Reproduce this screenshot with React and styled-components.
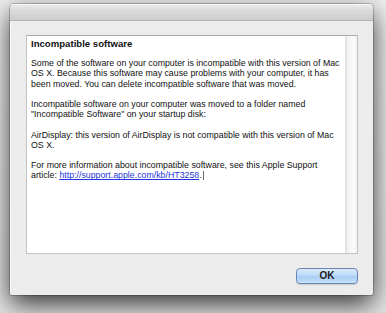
import React from "react";
import styled, { createGlobalStyle } from "styled-components";

const GlobalStyle = createGlobalStyle`
  html, body {
    margin: 0;
    padding: 0;
    background: #e9e9e9;
    height: 313px;
    overflow: hidden;
  }
`;

const Page = styled.div`
  width: 386px;
  height: 313px;
  display: flex;
  align-items: flex-start;
  background: linear-gradient(to bottom, #efefef 0%, #e4e4e4 100%);
`;

const Window = styled.div`
  margin: 4px 0 0 10px;
  width: 363px;
  height: 291px;
  display: flex;
  flex-direction: column;
  background: #ececec;
  border-radius: 4px 4px 2px 2px;
  box-shadow: 0 0 0 1px rgba(0, 0, 0, 0.2), 0 9px 26px rgba(0, 0, 0, 0.78);
  overflow: hidden;
`;

const TitleBar = styled.div`
  height: 16px;
  flex-shrink: 0;
  background: linear-gradient(to bottom, #ececec 0%, #dadada 40%, #cdcdcd 100%);
  border-bottom: 1px solid #b2b2b2;
  box-shadow: inset 0 1px 0 #f6f6f6;
`;

const Body = styled.div`
  flex: 1;
  display: flex;
  flex-direction: column;
  padding: 14px 15px 14px 15px;
  border-left: 1px solid #f7f7f7;
`;

const TextBox = styled.div`
  height: 217px;
  display: flex;
  background: #fff;
  border: 1px solid #c4c4c4;
  border-top-color: #a9a9a9;
`;

const TextArea = styled.div`
  flex: 1;
  padding: 3px 4px 0 4px;
  font-family: "Liberation Sans", Arial, sans-serif;
  font-size: 8.8px;
  line-height: 10.2px;
  color: #111;
`;

const Heading = styled.div`
  font-weight: bold;
  font-size: 9.6px;
  margin-bottom: 9px;
`;

const Para = styled.p`
  margin: 0 0 10.2px 0;
`;

const Link = styled.a`
  color: #2236dc;
  text-decoration: underline;
`;

const Caret = styled.span`
  display: inline-block;
  width: 0;
  height: 9px;
  margin-left: 1px;
  border-left: 1px solid #6a6a6a;
  vertical-align: -2px;
`;

const ScrollTrack = styled.div`
  width: 11px;
  flex-shrink: 0;
  background: linear-gradient(to right, #e4e4e4 0px, #f3f3f3 2px, #fbfbfb 70%, #f1f1f1 100%);
  border-left: 1px solid #dedede;
`;

const Footer = styled.div`
  display: flex;
  justify-content: flex-end;
  margin-top: 14px;
`;

const Button = styled.button`
  width: 62px;
  height: 16px;
  padding: 0;
  border: 1px solid #6a86b4;
  border-radius: 4px;
  background: linear-gradient(
    to bottom,
    #dcebfb 0%,
    #bcdaf8 45%,
    #a7cbf3 55%,
    #c6e3fc 100%
  );
  box-shadow: 0 1px 1px rgba(0, 0, 0, 0.15);
  font-family: "Liberation Sans", Arial, sans-serif;
  font-size: 10px;
  font-weight: bold;
  color: #1a1a1a;
  line-height: 14px;
`;

export default function App() {
  return (
    <>
      <GlobalStyle />
      <Page>
        <Window>
          <TitleBar />
          <Body>
            <TextBox>
              <TextArea>
                <Heading>Incompatible software</Heading>
                <Para>
                  Some of the software on your computer is incompatible with this version of Mac OS X. Because this
                  software may cause problems with your computer, it has been moved. You can delete incompatible
                  software that was moved.
                </Para>
                <Para>
                  Incompatible software on your computer was moved to a folder named "Incompatible Software" on your
                  startup disk:
                </Para>
                <Para>AirDisplay: this version of AirDisplay is not compatible with this version of Mac OS X.</Para>
                <Para>
                  For more information about incompatible software, see this Apple Support article:{" "}
                  <Link href="#">http://support.apple.com/kb/HT3258</Link>.<Caret />
                </Para>
              </TextArea>
              <ScrollTrack />
            </TextBox>
            <Footer>
              <Button>OK</Button>
            </Footer>
          </Body>
        </Window>
      </Page>
    </>
  );
}
